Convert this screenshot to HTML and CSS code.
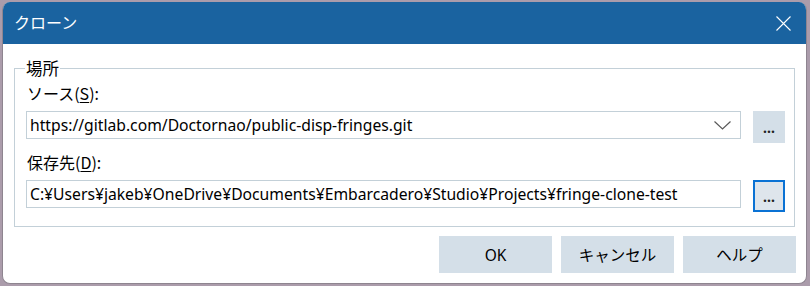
FILE: index.html
```html
<!DOCTYPE html>
<html lang="ja">
<head>
  <meta charset="UTF-8">
  <title>クローン</title>
  <link rel="stylesheet" href="styles.css">
</head>
<body>
  <div class="window">
    <div class="titlebar">
      <span class="title">クローン</span>
      <button class="close" aria-label="閉じる">
        <svg width="15" height="15" viewBox="0 0 15 15">
          <path d="M0.5 0.5 L14.5 14.5 M14.5 0.5 L0.5 14.5" stroke="#fff" stroke-width="1.1" fill="none"/>
        </svg>
      </button>
    </div>

    <div class="content">
      <fieldset class="group">
        <legend>場所</legend>

        <label class="field-label">ソース(<u>S</u>):</label>
        <div class="row">
          <div class="combo">
            <span class="value">https://gitlab.com/Doctornao/public-disp-fringes.git</span>
            <svg class="chevron" width="17" height="9" viewBox="0 0 17 9">
              <path d="M0.5 0.5 L8.5 8 L16.5 0.5" stroke="#5a5a5a" stroke-width="1.2" fill="none"/>
            </svg>
          </div>
          <button class="browse">...</button>
        </div>

        <label class="field-label second">保存先(<u>D</u>):</label>
        <div class="row">
          <div class="edit">
            <span class="value">C:¥Users¥jakeb¥OneDrive¥Documents¥Embarcadero¥Studio¥Projects¥fringe-clone-test</span>
          </div>
          <button class="browse focused">...</button>
        </div>
      </fieldset>

      <div class="actions">
        <button class="action">OK</button>
        <button class="action">キャンセル</button>
        <button class="action">ヘルプ</button>
      </div>
    </div>
  </div>
</body>
</html>
```

FILE: styles.css
```css
body {
  margin: 0;
  padding: 2px 0 0 2px;
  background: #ab9cab;
  font-family: "Noto Sans", "Noto Sans CJK JP", sans-serif;
  font-size: 16px;
  color: #000;
}
.window {
  width: 803px;
  height: 281px;
  background: #fff;
  border: 1px solid #8e8590;
  border-top: none;
  border-radius: 8px;
  overflow: hidden;
  box-sizing: content-box;
}
.titlebar {
  height: 42px;
  background: #1a63a0;
  display: flex;
  align-items: center;
  justify-content: space-between;
  padding: 0 0 0 11px;
}
.title {
  color: #fff;
  font-family: "Noto Sans CJK JP", sans-serif;
  font-size: 16px;
  margin-top: -2px;
}
.close {
  background: none;
  border: none;
  padding: 0;
  margin: 0 15px 0 0;
  width: 15px;
  height: 15px;
  display: flex;
}
.content {
  padding: 14px 0 0 0;
}
.group {
  margin: 0 11px;
  padding: 0 9px 14px 11px;
  border: 1px solid #c3d0d8;
  min-width: 0;
}
.group legend {
  font-family: "Noto Sans CJK JP", sans-serif;
  font-size: 16.5px;
  padding: 0 1px;
  margin-left: -1px;
  line-height: 21px;
}
.field-label {
  display: block;
  font-family: "Noto Sans CJK JP", sans-serif;
  line-height: 21px;
  margin: 4px 0 7px 1px;
}
.field-label.second {
  margin-top: 9px;
}
.field-label u {
  text-underline-offset: 2px;
}
.row {
  display: flex;
  gap: 12px;
  align-items: flex-start;
}
.combo,
.edit {
  flex: 1;
  height: 28px;
  box-sizing: border-box;
  border: 1px solid #c3d0d8;
  display: flex;
  align-items: center;
  padding: 0 6px 0 3px;
  font-size: 15.7px;
}
.value {
  flex: 1;
  white-space: nowrap;
}
.chevron {
  margin-right: 3px;
}
.browse {
  width: 32px;
  height: 32px;
  padding: 0;
  border: none;
  background: #d4dfe8;
  font-family: "Noto Sans", sans-serif;
  font-size: 14px;
  font-weight: bold;
  color: #222;
}
.browse.focused {
  border: 2px solid #0a72d4;
  background: #dee5ec;
}
.actions {
  display: flex;
  justify-content: flex-end;
  gap: 9px;
  padding: 9px 10px 0 0;
}
.action {
  width: 113px;
  height: 37px;
  border: none;
  background: #d4dfe8;
  font-family: "Noto Sans", "Noto Sans CJK JP", sans-serif;
  font-size: 15.5px;
  color: #000;
}
```
